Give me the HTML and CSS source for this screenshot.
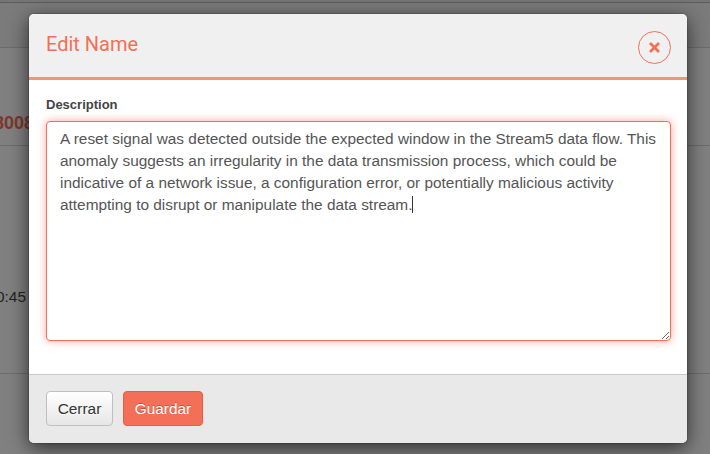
FILE: index.html
```html
<!DOCTYPE html>
<html lang="es">
<head>
<meta charset="utf-8">
<title>Edit Name</title>
<link rel="stylesheet" href="styles.css">
</head>
<body>
<div class="page">
  <div class="page-top"></div>
  <div class="page-nav"></div>
  <div class="page-heading"><span class="record-id">8008</span></div>
  <div class="page-row"><span class="time">0:45</span></div>
  <div class="page-rest"></div>
</div>
<div class="overlay">
  <section class="modal" role="dialog">
    <header class="modal-header">
      <h1>Edit Name</h1>
      <button class="close" aria-label="Cerrar">
        <svg width="13" height="13" viewBox="0 0 13 13"><path d="M2 2 L11 11 M11 2 L2 11"/></svg>
      </button>
    </header>
    <div class="modal-body">
      <label for="description">Description</label>
      <div class="field">
        <textarea id="description" spellcheck="false">A reset signal was detected outside the expected window in the Stream5 data flow. This anomaly suggests an irregularity in the data transmission process, which could be indicative of a network issue, a configuration error, or potentially malicious activity attempting to disrupt or manipulate the data stream.</textarea>
        <i class="caret"></i>
      </div>
    </div>
    <footer class="modal-footer">
      <button class="btn">Cerrar</button>
      <button class="btn btn-primary">Guardar</button>
    </footer>
  </section>
</div>
</body>
</html>
```
FILE: styles.css
```css
* { box-sizing: border-box; }
body {
  margin: 0;
  height: 454px;
  overflow: hidden;
  font-family: "Liberation Sans", Arial, sans-serif;
  font-size: 15.4px;
  line-height: 22px;
  color: #555;
}
.page {
  height: 454px;
  background: #808080;
  display: flex;
  flex-direction: column;
}
.page-top { height: 3px; background: #757575; border-bottom: 1px solid #5c5c5c; }
.page-nav { height: 45px; background: #7b7b7b; border-bottom: 1px solid #6c6c6c; }
.page-heading { height: 98px; border-bottom: 1px solid #6c6c6c; padding-top: 64px; }
.record-id { display: block; margin-left: -6px; font-size: 18px; font-weight: bold; color: #7d372b; }
.page-row { height: 228px; border-bottom: 1px solid #6c6c6c; padding-top: 140px; }
.time { display: block; margin-left: -4px; color: #222; }
.page-rest { flex: 1; }
.overlay {
  position: absolute;
  inset: 0;
  padding: 14px 23px 0 29px;
}
.modal {
  width: 658px;
  height: 429px;
  display: flex;
  flex-direction: column;
  background: #fff;
  border-radius: 5px;
  overflow: hidden;
  box-shadow: 0 5px 20px rgba(0, 0, 0, .65), 0 0 2px rgba(0, 0, 0, .5);
}
.modal-header {
  height: 66px;
  padding: 0 16px 0 17px;
  display: flex;
  align-items: center;
  justify-content: space-between;
  background: #f0f0f0;
  border-bottom: 3px solid #f4917f;
}
h1 {
  margin: 0 0 3px;
  font: 400 20px/24px Roboto, sans-serif;
  color: #f36f57;
}
.close {
  width: 33px;
  height: 33px;
  margin-top: 4px;
  padding: 0;
  display: grid;
  place-items: center;
  background: none;
  border: 1px solid #f36f57;
  border-radius: 50%;
}
.close svg { stroke: #f36f57; stroke-width: 2.8; fill: none; margin-top: -1px; }
.modal-body { flex: 1; padding: 14px 16px 0 17px; }
label {
  display: block;
  height: 27px;
  font-size: 13px;
  font-weight: bold;
  color: #444;
}
.field { position: relative; height: 220px; }
textarea {
  display: block;
  width: 625px;
  height: 220px;
  margin: 0;
  padding: 6px 13px;
  resize: both;
  font: inherit;
  color: #555;
  background: #fff;
  border: 1px solid #f36f57;
  border-radius: 4px;
  outline: 0;
  box-shadow: 0 0 8px rgba(243, 111, 87, .6);
}
.caret {
  position: absolute;
  left: 366px;
  top: 75px;
  width: 1px;
  height: 17px;
  background: #333;
}
.modal-footer {
  height: 69px;
  padding: 16px 17px;
  display: flex;
  gap: 10px;
  background: #e9e9e9;
  border-top: 1px solid #c8c8c8;
}
.btn {
  width: 67px;
  height: 35px;
  padding: 0;
  font: inherit;
  color: #333;
  text-shadow: 0 1px 1px rgba(255, 255, 255, .75);
  background: linear-gradient(#fff, #e6e6e6);
  border: 1px solid #bfbfbf;
  border-radius: 4px;
}
.btn-primary {
  width: 80px;
  color: #fff;
  text-shadow: 0 -1px 0 rgba(0, 0, 0, .25);
  background: #f36f57;
  border-color: #ef5b40;
}
```
